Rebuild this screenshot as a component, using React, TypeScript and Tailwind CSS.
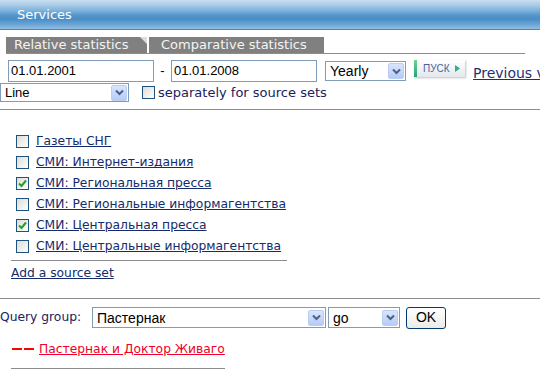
import React from "react";

const V = { fontFamily: '"DejaVu Sans", Verdana, sans-serif' };
const A = { fontFamily: '"Liberation Sans", Arial, sans-serif' };

function Arrow() {
  return (
    <div className="w-[16px] h-[16px] shrink-0 rounded-[2px] border border-[#b9cdf5] bg-gradient-to-b from-[#d9e5fd] to-[#b6cbf7] flex items-center justify-center">
      <svg width="9" height="7" viewBox="0 0 9 7">
        <path d="M1 1.5 L4.5 5 L8 1.5" fill="none" stroke="#4d6185" strokeWidth="2" />
      </svg>
    </div>
  );
}

function Select({ w, h, text, size = "text-[14px]" }: { w: string; h: string; text: string; size?: string }) {
  return (
    <div className={`${w} ${h} shrink-0 border border-[#7f9db9] bg-white flex items-center justify-between pl-[4px] pr-[1px]`}>
      <span className={`${size} text-black leading-none`} style={A}>{text}</span>
      <Arrow />
    </div>
  );
}

function Check({ checked }: { checked?: boolean }) {
  return (
    <div className="w-[13px] h-[13px] border border-[#1c5180] bg-gradient-to-br from-[#dcdcd7] to-[#ffffff] flex items-center justify-center shrink-0">
      {checked && (
        <svg width="9" height="9" viewBox="0 0 9 9">
          <path d="M1 4.5 L3.5 7 L8 1.5" fill="none" stroke="#21a121" strokeWidth="2" />
        </svg>
      )}
    </div>
  );
}

const items: [string, boolean][] = [
  ["Газеты СНГ", false],
  ["СМИ: Интернет-издания", false],
  ["СМИ: Региональная пресса", true],
  ["СМИ: Региональные информагентства", false],
  ["СМИ: Центральная пресса", true],
  ["СМИ: Центральные информагентства", false],
];

export default function App() {
  return (
    <div className="w-[540px] h-[370px] overflow-hidden bg-white flex flex-col" style={V}>
      {/* header */}
      <div
        className="h-[29px] shrink-0 flex items-center pl-[17px] text-white text-[13px]"
        style={{
          background:
            "linear-gradient(to bottom, #c9def0 0%, #a9cbe7 18%, #79b0db 38%, #5597cc 52%, #4a8dc5 66%, #6aa5d6 84%, #8fbee3 100%)",
        }}
      >
        Services
      </div>
      <div className="h-[1px] shrink-0 bg-[#3c8ad2]" />

      {/* tabs */}
      <div className="mt-[7px] ml-[6px] w-[519px] shrink-0 flex border-b border-[#8c8c8c] h-[17px]">
        <div className="relative w-[141px] shrink-0 h-[16px] bg-[#808080] text-[#f4f4f4] text-[13px] leading-[16px] pl-[8px] whitespace-nowrap">
          Relative statistics
          <div className="absolute right-0 top-0 w-0 h-0 border-t-[7px] border-t-[#dedede] border-l-[7px] border-l-transparent" />
        </div>
        <div className="w-[2px] shrink-0" />
        <div className="w-[175px] shrink-0 h-[16px] bg-[#808080] text-[#f4f4f4] text-[13px] leading-[16px] pl-[12px] whitespace-nowrap">
          Comparative statistics
        </div>
      </div>

      {/* row 1 */}
      <div className="mt-[6px] flex items-start h-[22px] shrink-0">
        <div className="ml-[8px] w-[146px] shrink-0 h-[22px] border border-[#7f9db9] flex items-center pl-[2px] text-[13px] text-black" style={A}>
          01.01.2001
        </div>
        <div className="w-[17px] shrink-0 text-center text-[13px] leading-[22px] text-black" style={A}>-</div>
        <div className="w-[146px] shrink-0 h-[22px] border border-[#7f9db9] flex items-center pl-[2px] text-[13px] text-black" style={A}>
          01.01.2008
        </div>
        <div className="ml-[8px] mt-[1px] shrink-0">
          <Select w="w-[81px]" h="h-[20px]" text="Yearly" />
        </div>
        <div className="ml-[8px] w-[51px] shrink-0 h-[17px] flex items-center bg-gradient-to-b from-[#ffffff] to-[#e4e8ec] shadow-[1px_1px_2px_rgba(0,0,0,0.25)]">
          <div className="w-[3px] h-full bg-gradient-to-b from-[#6fd48f] to-[#1aa37a]" />
          <span className="ml-[6px] text-[10px] text-[#4a5f9a] leading-none" style={A}>ПУСК</span>
          <svg className="ml-[5px]" width="5" height="7" viewBox="0 0 5 7"><path d="M0 0 L5 3.5 L0 7Z" fill="#2bb08a" /></svg>
        </div>
        <a className="ml-[8px] mt-[3px] shrink-0 text-[14px] text-[#1f2f73] underline whitespace-nowrap" style={V}>Previous version</a>
      </div>

      {/* row 2 */}
      <div className="flex items-center h-[19px] mt-[1px] shrink-0">
        <Select w="w-[129px]" h="h-[19px]" text="Line" size="text-[13px]" />
        <div className="ml-[13px] shrink-0"><Check /></div>
        <span className="ml-[3px] text-[13px] text-[#1a2260] whitespace-nowrap">separately for source sets</span>
      </div>

      <div className="mt-[7px] h-[1px] bg-[#8c8c8c] shrink-0" />

      {/* list */}
      <div className="mt-[21px] flex flex-col shrink-0">
        {items.map(([t, c]) => (
          <div key={t} className="h-[21px] flex items-center pl-[16px]">
            <Check checked={c} />
            <a className="ml-[7px] text-[12.3px] text-[#142c6c] underline whitespace-nowrap">{t}</a>
          </div>
        ))}
      </div>
      <div className="mt-[3px] ml-[11px] w-[276px] h-[1px] bg-[#8c8c8c] shrink-0" />
      <div className="mt-[3px] ml-[11px] h-[18px] leading-[18px] text-[12.3px] shrink-0">
        <a className="text-[#142c6c] underline">Add a source set</a>
      </div>

      <div className="mt-[16px] h-[1px] bg-[#8c8c8c] shrink-0" />

      {/* query */}
      <div className="mt-[8px] flex items-center h-[21px] shrink-0">
        <span className="text-[12.3px] text-[#1a2260] w-[92px] shrink-0 whitespace-nowrap">Query group:</span>
        <Select w="w-[234px]" h="h-[21px]" text="Пастернак" />
        <div className="ml-[2px] shrink-0"><Select w="w-[72px]" h="h-[21px]" text="go" /></div>
        <div className="ml-[6px] shrink-0 w-[40px] h-[22px] rounded-[3px] border border-[#003c74] bg-gradient-to-b from-[#ffffff] to-[#ecebe6] flex items-center justify-center text-[14px] text-black" style={A}>
          OK
        </div>
      </div>

      <div className="mt-[12px] h-[18px] flex items-center pl-[12px] text-[12.3px] shrink-0">
        <div className="flex gap-[2px] w-[22px] shrink-0">
          <div className="w-[10px] h-[2px] bg-[#ff0000]" />
          <div className="w-[10px] h-[2px] bg-[#ff0000]" />
        </div>
        <a className="ml-[5px] text-[#f0002a] underline whitespace-nowrap">Пастернак и Доктор Живаго</a>
      </div>
      <div className="mt-[10px] ml-[11px] w-[214px] h-[1px] bg-[#8c8c8c] shrink-0" />
    </div>
  );
}
